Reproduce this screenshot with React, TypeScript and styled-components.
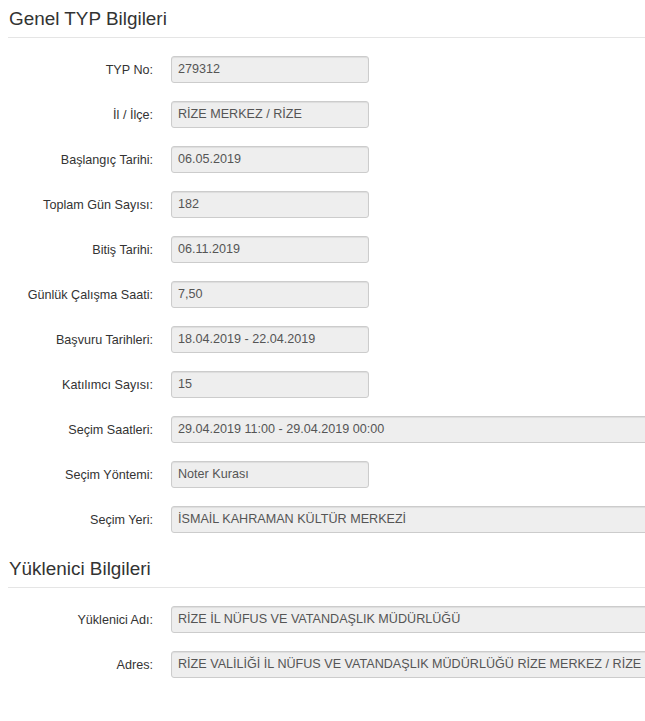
import styled, { createGlobalStyle } from "styled-components";

const GlobalStyle = createGlobalStyle`
  html, body {
    overflow: hidden;
  }
  body {
    margin: 0;
    background: #fff;
    font-family: "Liberation Sans", Arial, Helvetica, sans-serif;
    font-size: 12.6px;
    color: #333;
  }
`;

const StyledPage = styled.div`
  padding-left: 8px;
  width: 100vw;
  box-sizing: border-box;
  overflow: hidden;
`;

const StyledSection = styled.fieldset`
  border: 0;
  margin: 0;
  padding: 0;
  min-width: 0;
  & + & {
    margin-top: -1px;
  }
`;

const StyledLegend = styled.div`
  padding: 5px 0 5px 1px;
  margin-bottom: 18px;
  font-size: 18.9px;
  line-height: 27px;
  color: #333;
  border-bottom: 1px solid #e5e5e5;
`;

const StyledRow = styled.div`
  display: flex;
  align-items: center;
  gap: 18px;
  margin-bottom: 18px;
`;

const StyledLabel = styled.label`
  flex: 0 0 145px;
  text-align: right;
  color: #333;
`;

const StyledField = styled.div<{ $wide?: boolean }>`
  box-sizing: border-box;
  flex: 0 0 ${(p) => (p.$wide ? "620px" : "198px")};
  height: 27px;
  line-height: 25px;
  padding: 0 6px;
  background: #eee;
  border: 1px solid #ccc;
  border-radius: 3px;
  box-shadow: inset 0 1px 1px rgba(0, 0, 0, 0.075);
  color: #555;
  white-space: nowrap;
  overflow: hidden;
`;

type Item = { label: string; value: string; wide?: boolean };

const genel: Item[] = [
  { label: "TYP No:", value: "279312" },
  { label: "İl / İlçe:", value: "RİZE MERKEZ / RİZE" },
  { label: "Başlangıç Tarihi:", value: "06.05.2019" },
  { label: "Toplam Gün Sayısı:", value: "182" },
  { label: "Bitiş Tarihi:", value: "06.11.2019" },
  { label: "Günlük Çalışma Saati:", value: "7,50" },
  { label: "Başvuru Tarihleri:", value: "18.04.2019 - 22.04.2019" },
  { label: "Katılımcı Sayısı:", value: "15" },
  {
    label: "Seçim Saatleri:",
    value: "29.04.2019 11:00 - 29.04.2019 00:00",
    wide: true,
  },
  { label: "Seçim Yöntemi:", value: "Noter Kurası" },
  { label: "Seçim Yeri:", value: "İSMAİL KAHRAMAN KÜLTÜR MERKEZİ", wide: true },
];

const yuklenici: Item[] = [
  {
    label: "Yüklenici Adı:",
    value: "RİZE İL NÜFUS VE VATANDAŞLIK MÜDÜRLÜĞÜ",
    wide: true,
  },
  {
    label: "Adres:",
    value: "RİZE VALİLİĞİ İL NÜFUS VE VATANDAŞLIK MÜDÜRLÜĞÜ RİZE MERKEZ / RİZE",
    wide: true,
  },
];

const Section = ({ title, items }: { title: string; items: Item[] }) => (
  <StyledSection>
    <StyledLegend>{title}</StyledLegend>
    {items.map((item, i) => (
      <StyledRow key={`row-${i}`}>
        <StyledLabel>{item.label}</StyledLabel>
        <StyledField $wide={item.wide}>{item.value}</StyledField>
      </StyledRow>
    ))}
  </StyledSection>
);

export default function App() {
  return (
    <StyledPage>
      <GlobalStyle />
      <Section title="Genel TYP Bilgileri" items={genel} />
      <Section title="Yüklenici Bilgileri" items={yuklenici} />
    </StyledPage>
  );
}
